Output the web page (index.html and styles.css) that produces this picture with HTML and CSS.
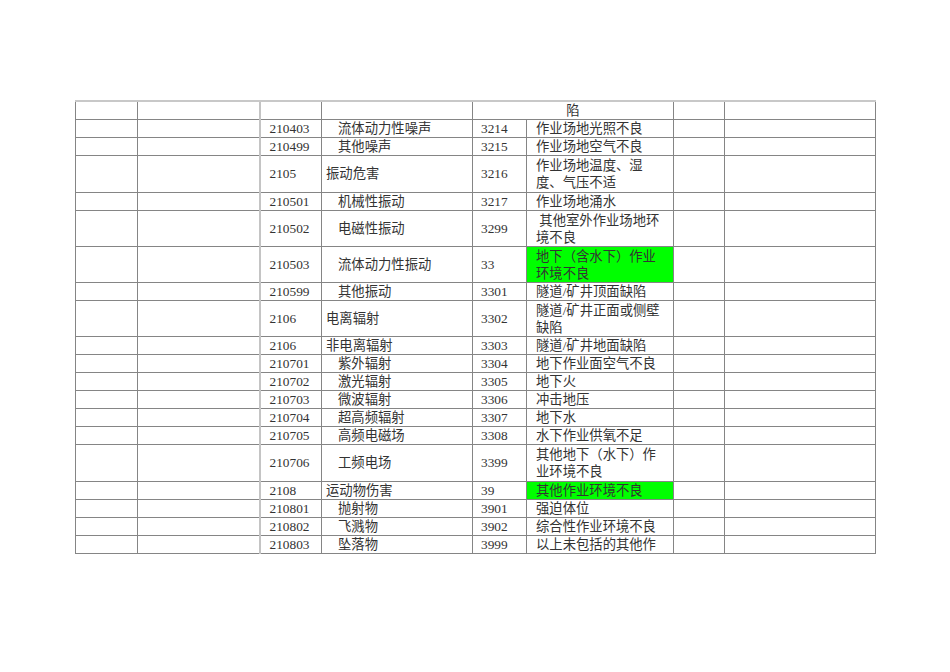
FILE: index.html
```html
<!DOCTYPE html>
<html lang="zh-CN">
<head>
<meta charset="utf-8">
<title>表</title>
<link rel="stylesheet" href="styles.css">
</head>
<body>
<table class="grid">
  <colgroup>
    <col class="c1"><col class="c2"><col class="c3"><col class="c4"><col class="c5"><col class="c6"><col class="c7"><col class="c8">
  </colgroup>
  <tbody>
    <tr class="r1 top"><td></td><td></td><td class="code"></td><td class="name"></td><td class="mid" colspan="2">陷</td><td></td><td></td></tr>
    <tr class="r1"><td></td><td></td><td class="code">210403</td><td class="name ind">流体动力性噪声</td><td class="num">3214</td><td class="desc">作业场地光照不良</td><td></td><td></td></tr>
    <tr class="r1"><td></td><td></td><td class="code">210499</td><td class="name ind">其他噪声</td><td class="num">3215</td><td class="desc">作业场地空气不良</td><td></td><td></td></tr>
    <tr class="r2 tall"><td></td><td></td><td class="code">2105</td><td class="name">振动危害</td><td class="num">3216</td><td class="desc">作业场地温度、湿度、气压不适</td><td></td><td></td></tr>
    <tr class="r1"><td></td><td></td><td class="code">210501</td><td class="name ind">机械性振动</td><td class="num">3217</td><td class="desc">作业场地涌水</td><td></td><td></td></tr>
    <tr class="r2"><td></td><td></td><td class="code">210502</td><td class="name ind">电磁性振动</td><td class="num">3299</td><td class="desc">&nbsp;其他室外作业场地环境不良</td><td></td><td></td></tr>
    <tr class="r2"><td></td><td></td><td class="code">210503</td><td class="name ind">流体动力性振动</td><td class="num">33</td><td class="desc green">地下（含水下）作业环境不良</td><td></td><td></td></tr>
    <tr class="r1"><td></td><td></td><td class="code">210599</td><td class="name ind">其他振动</td><td class="num">3301</td><td class="desc">隧道/矿井顶面缺陷</td><td></td><td></td></tr>
    <tr class="r2"><td></td><td></td><td class="code">2106</td><td class="name">电离辐射</td><td class="num">3302</td><td class="desc">隧道/矿井正面或侧壁缺陷</td><td></td><td></td></tr>
    <tr class="r1"><td></td><td></td><td class="code low">2106</td><td class="name">非电离辐射</td><td class="num">3303</td><td class="desc">隧道/矿井地面缺陷</td><td></td><td></td></tr>
    <tr class="r1"><td></td><td></td><td class="code">210701</td><td class="name ind">紫外辐射</td><td class="num">3304</td><td class="desc">地下作业面空气不良</td><td></td><td></td></tr>
    <tr class="r1"><td></td><td></td><td class="code">210702</td><td class="name ind">激光辐射</td><td class="num">3305</td><td class="desc">地下火</td><td></td><td></td></tr>
    <tr class="r1"><td></td><td></td><td class="code">210703</td><td class="name ind">微波辐射</td><td class="num">3306</td><td class="desc">冲击地压</td><td></td><td></td></tr>
    <tr class="r1"><td></td><td></td><td class="code">210704</td><td class="name ind">超高频辐射</td><td class="num">3307</td><td class="desc">地下水</td><td></td><td></td></tr>
    <tr class="r1"><td></td><td></td><td class="code">210705</td><td class="name ind">高频电磁场</td><td class="num">3308</td><td class="desc">水下作业供氧不足</td><td></td><td></td></tr>
    <tr class="r2 tall"><td></td><td></td><td class="code">210706</td><td class="name ind">工频电场</td><td class="num">3399</td><td class="desc">其他地下（水下）作业环境不良</td><td></td><td></td></tr>
    <tr class="r1"><td></td><td></td><td class="code low">2108</td><td class="name">运动物伤害</td><td class="num">39</td><td class="desc green">其他作业环境不良</td><td></td><td></td></tr>
    <tr class="r1"><td></td><td></td><td class="code low">210801</td><td class="name ind">抛射物</td><td class="num">3901</td><td class="desc">强迫体位</td><td></td><td></td></tr>
    <tr class="r1"><td></td><td></td><td class="code low">210802</td><td class="name ind">飞溅物</td><td class="num">3902</td><td class="desc">综合性作业环境不良</td><td></td><td></td></tr>
    <tr class="r1 last"><td></td><td></td><td class="code">210803</td><td class="name ind">坠落物</td><td class="num">3999</td><td class="desc">以上未包括的其他作</td><td></td><td></td></tr>
  </tbody>
</table>
</body>
</html>
```

FILE: styles.css
```css
html, body {
  margin: 0;
  padding: 0;
  background: #ffffff;
}

body {
  font-family: "Liberation Serif", "Noto Sans CJK SC", serif;
  font-size: 13.33px;
  color: #333333;
}

.grid {
  margin: 100px 0 0 75px;
  border-collapse: collapse;
  table-layout: fixed;
  width: 801px;
}

.c1 { width: 62px; }
.c2 { width: 122px; }
.c3 { width: 62px; }
.c4 { width: 151px; }
.c5 { width: 54px; }
.c6 { width: 147px; }
.c7 { width: 51px; }
.c8 { width: 151px; }

.grid td {
  border: 1px solid #858585;
  padding: 0 9px;
  line-height: 16px;
  vertical-align: middle;
  white-space: normal;
  overflow: hidden;
}

.grid tr.r1 td { height: 17px; }
.grid tr.r2 td { height: 35px; }
.grid tr.r2.tall td { height: 36px; }

.grid tr.r2 td.desc { line-height: 17px; }

.grid tr.top td {
  border-top: 2px solid #c8c8c8;
}

.grid td.code {
  border-left: 2px solid #c4c4c4;
  padding-left: 9px;
}

.grid td.name {
  padding-left: 4px;
}

.grid td.name.ind {
  padding-left: 16px;
}

.grid td.num {
  padding-left: 8px;
}

.grid td.desc {
  border-left: 1px solid #bdbdbd;
  padding-left: 9px;
  padding-right: 9px;
}

.grid td.mid {
  text-align: center;
}

.grid td.green {
  background: #00ff00;
}

.grid td.low {
  vertical-align: bottom;
}

.grid tr.last td {
  border-bottom: 1px solid #858585;
}
```
